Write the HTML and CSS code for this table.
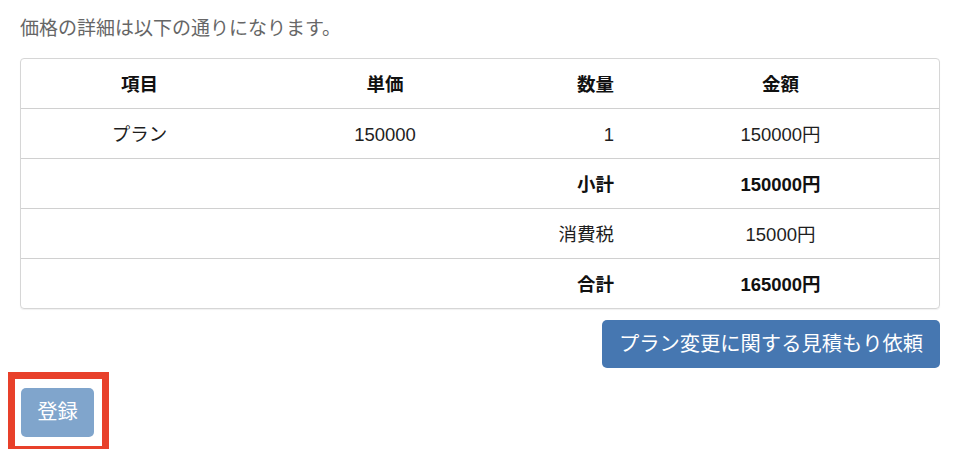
FILE: index.html
```html
<!DOCTYPE html>
<html lang="ja">
<head>
<meta charset="utf-8">
<link rel="stylesheet" href="styles.css">
</head>
<body>
<div class="page">
  <p class="intro">価格の詳細は以下の通りになります。</p>
  <div class="panel">
    <table class="price">
      <colgroup>
        <col class="c1"><col class="c2"><col class="c3"><col class="c4">
      </colgroup>
      <thead>
        <tr><th>項目</th><th>単価</th><th class="r">数量</th><th>金額</th></tr>
      </thead>
      <tbody>
        <tr><td>プラン</td><td>150000</td><td class="r">1</td><td>150000円</td></tr>
        <tr><td></td><td></td><td class="r b">小計</td><td class="b">150000円</td></tr>
        <tr><td></td><td></td><td class="r">消費税</td><td>15000円</td></tr>
        <tr><td></td><td></td><td class="r b">合計</td><td class="b">165000円</td></tr>
      </tbody>
    </table>
  </div>
  <div class="actions">
    <button class="btn btn-primary">プラン変更に関する見積もり依頼</button>
  </div>
  <div class="highlight">
    <button class="btn btn-disabled">登録</button>
  </div>
</div>
</body>
</html>
```
FILE: styles.css
```css
html, body {
  margin: 0;
  padding: 0;
  background: #fff;
}
body {
  font-family: "Liberation Sans", "Noto Sans CJK JP", sans-serif;
  color: #222;
  overflow: hidden;
}
.page {
  width: 920px;
  padding: 15px 20px 0 20px;
}
.intro {
  margin: 0;
  font-size: 19px;
  line-height: 27px;
  color: #666;
}
.panel {
  margin-top: 16px;
  border: 1px solid #d6d6d6;
  border-radius: 4px;
  box-shadow: 0 1px 1px rgba(0, 0, 0, 0.06);
  overflow: hidden;
}
.price {
  width: 100%;
  border-collapse: separate;
  border-spacing: 0;
  table-layout: fixed;
  font-size: 18.5px;
}
.c1 { width: 237px; }
.c2 { width: 254px; }
.c3 { width: 110px; }
.c4 { width: 317px; }
.price tr {
  height: 50px;
}
.price tbody tr:last-child {
  height: 49px;
}
.price th,
.price td {
  padding: 3px 8px 0 8px;
  text-align: center;
  vertical-align: middle;
  line-height: 1;
  border-bottom: 1px solid #d0d0d0;
  color: #1e1e1e;
}
.price tbody tr:last-child td {
  border-bottom: none;
}
.price th,
.price .b {
  font-weight: bold;
  color: #111;
}
.price .r {
  text-align: right;
}
.actions {
  display: flex;
  justify-content: flex-end;
  margin-top: 11px;
}
.btn {
  font-family: "Liberation Sans", "Noto Sans CJK JP", sans-serif;
  font-size: 20.3px;
  line-height: 1;
  color: #fff;
  border: none;
  border-radius: 5px;
  display: inline-flex;
  align-items: center;
  justify-content: center;
}
.btn-primary {
  background: #4677b1;
  height: 48px;
  width: 338px;
  padding: 0;
}
.btn-disabled {
  background: #80a5cc;
  height: 49px;
  padding: 0;
  width: 73px;
}
.highlight {
  display: inline-block;
  margin-top: 4px;
  margin-left: -12px;
  border: 7px solid #e8402a;
  padding: 9px 8px 9px 6px;
}
```
